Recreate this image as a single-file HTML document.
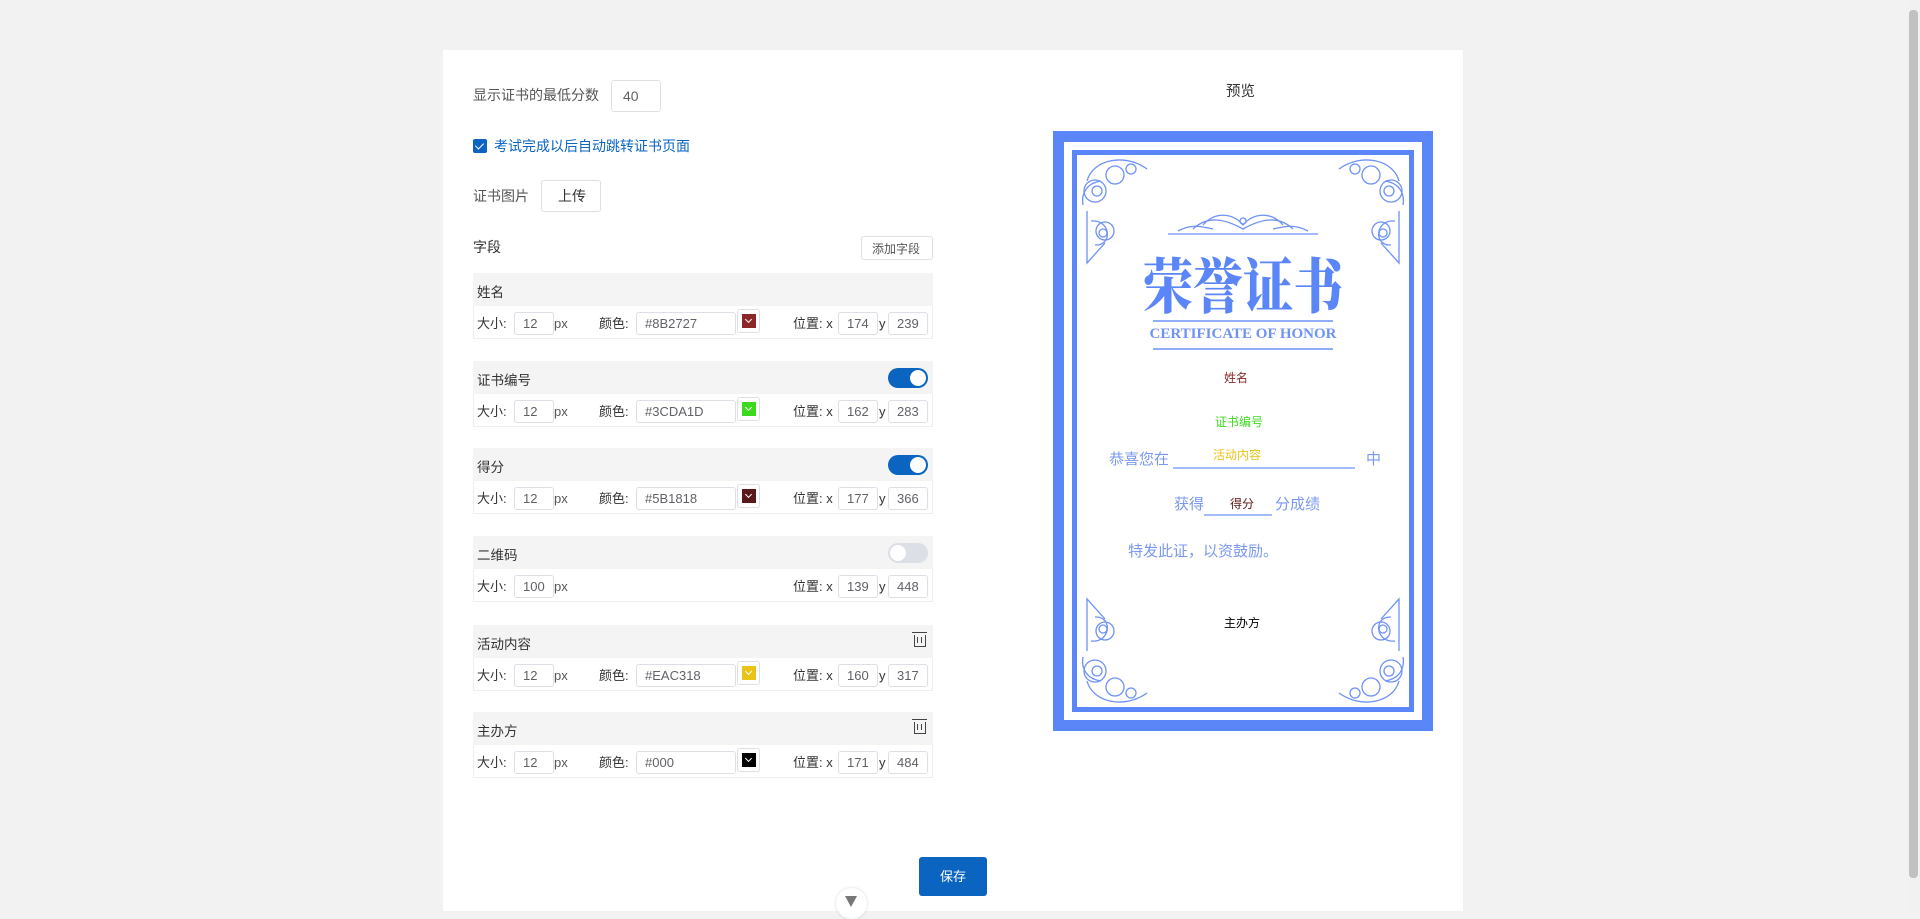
<!DOCTYPE html>
<html><head><meta charset="utf-8">
<style>
*{box-sizing:border-box;margin:0;padding:0}
body{width:1920px;height:911px;background:#f2f2f2;font-family:"Liberation Sans","Noto Sans CJK SC",sans-serif;font-size:13px;color:#333;position:relative;overflow:hidden}
.a{position:absolute}
.panel{left:443px;top:50px;width:1020px;height:861px;background:#fff}
.inp{position:absolute;border:1px solid #dcdfe6;border-radius:3px;background:#fff;color:#606266;font-size:13px;display:flex;align-items:center;padding-left:8px;height:23px}
.hdr{position:absolute;left:473px;width:460px;height:33px;background:#f4f4f4;font-size:13.5px;color:#333;padding:8px 0 0 4px}
.row{position:absolute;left:473px;width:460px;height:33px;border:1px solid #eee;border-top:none;background:#fff}
.lbl{position:absolute;font-size:13px;color:#333;line-height:16px}
.sw{position:absolute;width:23px;height:24px;border:1px solid #dcdfe6;border-radius:3px;background:#fff}
.sw i{position:absolute;left:4px;top:4px;width:14px;height:14px;display:block}
.sw i:after{content:"";position:absolute;left:4px;top:3px;width:4px;height:4px;border-right:1px solid #fff;border-bottom:1px solid #fff;transform:rotate(45deg)}
.tg{position:absolute;left:888px;width:40px;height:20px;border-radius:10px;background:#0a64c0}
.tg:after{content:"";position:absolute;right:2px;top:2px;width:16px;height:16px;border-radius:50%;background:#fff}
.tg.off{background:#dcdfe6}.tg.off:after{left:2px;right:auto}
.trash{position:absolute;left:914px;width:12px;height:12px;border:1.5px solid #444;border-top:none}
.trash:before{content:"";position:absolute;left:-3px;top:-3px;width:15px;border-top:1.5px solid #444}
.trash:after{content:"";position:absolute;left:2px;top:2px;width:3px;height:6px;border-left:1px solid #444;border-right:1px solid #444}
.c{position:absolute;font-family:"Liberation Sans","Noto Sans CJK SC",sans-serif;white-space:nowrap;line-height:1}
</style></head><body>
<div class="a panel"></div>
<div class="a" style="left:1907px;top:0;width:13px;height:911px;background:#f1f1f1"></div>
<div class="a" style="left:1909px;top:10px;width:9px;height:868px;background:#c1c1c1;border-radius:4px"></div>

<div class="lbl" style="left:473px;top:87px;color:#555;font-size:14px">显示证书的最低分数</div>
<div class="inp" style="left:611px;top:80px;width:50px;height:32px;padding-left:11px;font-size:14px">40</div>

<div class="a" style="left:473px;top:139px;width:14px;height:14px;background:#0a64c0;border-radius:2px"></div>
<div class="a" style="left:477px;top:141px;width:5px;height:8px;border-right:1.5px solid #fff;border-bottom:1.5px solid #fff;transform:rotate(45deg)"></div>
<div class="lbl" style="left:494px;top:138px;color:#0a64c0;font-size:14px">考试完成以后自动跳转证书页面</div>

<div class="lbl" style="left:473px;top:188px;color:#555;font-size:14px">证书图片</div>
<div class="inp" style="left:541px;top:180px;width:60px;height:32px;padding-left:16px;color:#333;font-size:14px">上传</div>

<div class="lbl" style="left:473px;top:239px;font-size:14px">字段</div>
<div class="inp" style="left:861px;top:236px;width:72px;height:24px;padding-left:10px;font-size:12px;color:#555">添加字段</div>

<div class="hdr" style="top:273px">姓名</div>
<div class="row" style="top:306px"></div>
<div class="hdr" style="top:361px">证书编号</div><div class="tg" style="top:368px"></div>
<div class="row" style="top:394px"></div>
<div class="hdr" style="top:448px">得分</div><div class="tg" style="top:455px"></div>
<div class="row" style="top:481px"></div>
<div class="hdr" style="top:536px">二维码</div><div class="tg off" style="top:543px"></div>
<div class="row" style="top:569px"></div>
<div class="hdr" style="top:625px">活动内容</div><div class="trash" style="top:635px"></div>
<div class="row" style="top:658px"></div>
<div class="hdr" style="top:712px">主办方</div><div class="trash" style="top:722px"></div>
<div class="row" style="top:745px"></div>

<div class="lbl" style="left:477px;top:316px">大小:</div><div class="inp" style="left:514px;top:312px;width:40px">12</div><div class="lbl" style="left:554px;top:316px;color:#555">px</div>
<div class="lbl" style="left:599px;top:316px">颜色:</div><div class="inp" style="left:636px;top:312px;width:100px">#8B2727</div><div class="sw" style="left:737px;top:309px"><i style="background:#8B2727"></i></div>
<div class="lbl" style="left:793px;top:316px">位置: x</div><div class="inp" style="left:838px;top:312px;width:40px">174</div><div class="lbl" style="left:879px;top:316px">y</div><div class="inp" style="left:888px;top:312px;width:40px">239</div>

<div class="lbl" style="left:477px;top:404px">大小:</div><div class="inp" style="left:514px;top:400px;width:40px">12</div><div class="lbl" style="left:554px;top:404px;color:#555">px</div>
<div class="lbl" style="left:599px;top:404px">颜色:</div><div class="inp" style="left:636px;top:400px;width:100px">#3CDA1D</div><div class="sw" style="left:737px;top:397px"><i style="background:#3CDA1D"></i></div>
<div class="lbl" style="left:793px;top:404px">位置: x</div><div class="inp" style="left:838px;top:400px;width:40px">162</div><div class="lbl" style="left:879px;top:404px">y</div><div class="inp" style="left:888px;top:400px;width:40px">283</div>

<div class="lbl" style="left:477px;top:491px">大小:</div><div class="inp" style="left:514px;top:487px;width:40px">12</div><div class="lbl" style="left:554px;top:491px;color:#555">px</div>
<div class="lbl" style="left:599px;top:491px">颜色:</div><div class="inp" style="left:636px;top:487px;width:100px">#5B1818</div><div class="sw" style="left:737px;top:484px"><i style="background:#5B1818"></i></div>
<div class="lbl" style="left:793px;top:491px">位置: x</div><div class="inp" style="left:838px;top:487px;width:40px">177</div><div class="lbl" style="left:879px;top:491px">y</div><div class="inp" style="left:888px;top:487px;width:40px">366</div>

<div class="lbl" style="left:477px;top:579px">大小:</div><div class="inp" style="left:514px;top:575px;width:40px">100</div><div class="lbl" style="left:554px;top:579px;color:#555">px</div>
<div class="lbl" style="left:793px;top:579px">位置: x</div><div class="inp" style="left:838px;top:575px;width:40px">139</div><div class="lbl" style="left:879px;top:579px">y</div><div class="inp" style="left:888px;top:575px;width:40px">448</div>

<div class="lbl" style="left:477px;top:668px">大小:</div><div class="inp" style="left:514px;top:664px;width:40px">12</div><div class="lbl" style="left:554px;top:668px;color:#555">px</div>
<div class="lbl" style="left:599px;top:668px">颜色:</div><div class="inp" style="left:636px;top:664px;width:100px">#EAC318</div><div class="sw" style="left:737px;top:661px"><i style="background:#EAC318"></i></div>
<div class="lbl" style="left:793px;top:668px">位置: x</div><div class="inp" style="left:838px;top:664px;width:40px">160</div><div class="lbl" style="left:879px;top:668px">y</div><div class="inp" style="left:888px;top:664px;width:40px">317</div>

<div class="lbl" style="left:477px;top:755px">大小:</div><div class="inp" style="left:514px;top:751px;width:40px">12</div><div class="lbl" style="left:554px;top:755px;color:#555">px</div>
<div class="lbl" style="left:599px;top:755px">颜色:</div><div class="inp" style="left:636px;top:751px;width:100px">#000</div><div class="sw" style="left:737px;top:748px"><i style="background:#000"></i></div>
<div class="lbl" style="left:793px;top:755px">位置: x</div><div class="inp" style="left:838px;top:751px;width:40px">171</div><div class="lbl" style="left:879px;top:755px">y</div><div class="inp" style="left:888px;top:751px;width:40px">484</div>

<div class="a" style="left:919px;top:857px;width:68px;height:39px;background:#0a64c0;border-radius:3px;color:#fff;font-size:13px;text-align:center;line-height:39px">保存</div>
<div class="a" style="left:836px;top:888px;width:31px;height:31px;border-radius:50%;background:#fff;box-shadow:0 0 3px rgba(0,0,0,.15)"></div>
<div class="a" style="left:845px;top:896px;width:0;height:0;border-left:6px solid transparent;border-right:6px solid transparent;border-top:11px solid #777"></div>

<div class="lbl" style="left:1226px;top:84px;font-size:14.5px">预览</div>

<div class="a" style="left:1053px;top:131px;width:380px;height:600px;background:#5b86f8">
 <div class="a" style="left:11px;top:11px;width:358px;height:578px;background:#fff">
  <div class="a" style="left:8px;top:8px;width:342px;height:562px;border:5px solid #5b86f8"></div>
 </div>
 <svg class="a" style="left:0;top:0" width="380" height="600" viewBox="0 0 380 600" fill="none" stroke="#6e92f5" stroke-width="1.3">
  <g id="orn">
   <circle cx="42" cy="60" r="11"/><circle cx="62" cy="44" r="9"/><circle cx="78" cy="38" r="5"/><circle cx="44" cy="60" r="5"/>
   <path d="M34 50 C40 28 72 22 94 38 M30 74 C28 62 34 52 48 50 M34 80 V132 L52 112 M38 90 C58 88 60 115 42 114"/>
   <circle cx="52" cy="100" r="9"/><circle cx="50" cy="102" r="4"/>
  </g>
  <use href="#orn" transform="translate(380 0) scale(-1 1)"/>
  <use href="#orn" transform="translate(0 600) scale(1 -1)"/>
  <use href="#orn" transform="translate(380 600) scale(-1 -1)"/>
  <path d="M115 103 H265 M140 98 C155 84 172 88 190 98 C208 88 225 84 240 98 M150 94 C162 80 180 82 190 94 C200 82 218 80 230 94 M125 100 C140 92 150 96 160 98 M220 98 C230 96 240 92 255 100"/>
  <circle cx="190" cy="90" r="3"/>
  <path d="M100 190 H280 M100 218 H280" stroke-width="1.5"/>
  <path d="M120 337 H302 M151 384 H219" stroke-width="1.2"/>
 </svg>
 <div class="c" style="left:0;width:380px;text-align:center;top:122px;font-family:'Noto Serif CJK SC','Liberation Serif',serif;font-weight:900;font-size:50px;color:#5b86f8;transform:scaleY(1.2);transform-origin:top">荣誉证书</div>
 <div class="c" style="left:0;width:380px;text-align:center;top:196px;font-family:'Liberation Serif',serif;font-weight:bold;font-size:15px;color:#6e92f5">CERTIFICATE OF HONOR</div>
 <div class="c" style="left:171px;top:241px;font-size:12px;color:#8B2727">姓名</div>
 <div class="c" style="left:162px;top:285px;font-size:12px;color:#3CDA1D">证书编号</div>
 <div class="c" style="left:56px;top:321px;font-size:15px;color:#7a98f0">恭喜您在</div>
 <div class="c" style="left:160px;top:318px;font-size:12px;color:#EAC318">活动内容</div>
 <div class="c" style="left:313px;top:321px;font-size:15px;color:#7a98f0">中</div>
 <div class="c" style="left:121px;top:366px;font-size:15px;color:#7a98f0">获得</div>
 <div class="c" style="left:177px;top:367px;font-size:12px;color:#5B1818">得分</div>
 <div class="c" style="left:222px;top:366px;font-size:15px;color:#7a98f0">分成绩</div>
 <div class="c" style="left:75px;top:413px;font-size:15px;color:#7a98f0">特发此证，以资鼓励。</div>
 <div class="c" style="left:171px;top:486px;font-size:12px;color:#000">主办方</div>
</div>
</body></html>
